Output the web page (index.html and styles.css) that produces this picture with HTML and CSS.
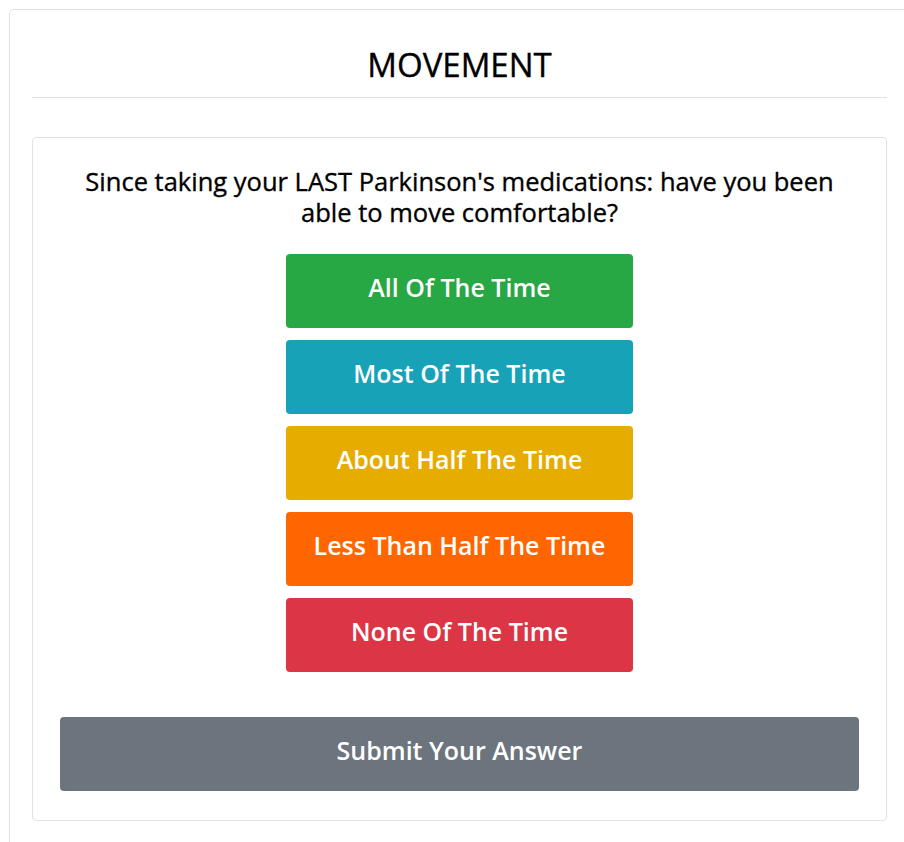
FILE: index.html
```html
<!DOCTYPE html>
<html lang="en">
<head>
<meta charset="utf-8">
<title>Movement</title>
<link rel="stylesheet" href="styles.css">
</head>
<body>
<div class="outer">
  <div class="header">
    <h2 class="title">MOVEMENT</h2>
  </div>
  <div class="question-card">
    <h4 class="question">Since taking your LAST Parkinson's medications: have you been able to move comfortable?</h4>
    <div class="options">
      <button class="opt opt-green">All Of The Time</button>
      <button class="opt opt-teal">Most Of The Time</button>
      <button class="opt opt-yellow">About Half The Time</button>
      <button class="opt opt-orange">Less Than Half The Time</button>
      <button class="opt opt-red">None Of The Time</button>
    </div>
    <button class="submit">Submit Your Answer</button>
  </div>
</div>
</body>
</html>
```
FILE: styles.css
```css
html, body {
  margin: 0;
  padding: 0;
  background: #fff;
  overflow: hidden;
}
body {
  font-family: "Segoe UI", "Open Sans", "Noto Sans", sans-serif;
  color: #111;
  height: 842px;
}
.outer {
  box-sizing: border-box;
  margin: 9px 0 0 9px;
  width: 901px;
  height: 900px;
  border: 1px solid #e2e2e2;
  border-radius: 5px;
  padding: 0 22px;
}
.header {
  padding: 36px 0 13px;
  border-bottom: 1px solid #e0e0e0;
}
.title {
  margin: 0;
  text-align: center;
  font-size: 33px;
  line-height: 38px;
  font-weight: 500;
  color: #000;
  -webkit-text-stroke: 0.35px #000;
}
.question-card {
  margin-top: 39px;
  border: 1px solid #e2e2e2;
  border-radius: 4px;
  padding: 28px 27px 29px;
  display: flex;
  flex-direction: column;
  align-items: center;
}
.question {
  margin: 0;
  text-align: center;
  font-size: 25.5px;
  line-height: 31px;
  font-weight: 500;
  color: #000;
  -webkit-text-stroke: 0.35px #000;
}
.options {
  margin-top: 26px;
  display: flex;
  flex-direction: column;
  gap: 12px;
}
.opt, .submit {
  font-family: inherit;
  border: none;
  border-radius: 4px;
  color: #fff;
  font-size: 25px;
  font-weight: 600;
  height: 74px;
  padding: 0 0 9px;
  cursor: pointer;
}
.opt {
  width: 347px;
}
.opt-green { background: #28a745; }
.opt-teal { background: #17a2b8; }
.opt-yellow { background: #e6ac00; }
.opt-orange { background: #ff6600; }
.opt-red { background: #dc3545; }
.submit {
  margin-top: 45px;
  width: 100%;
  background: #6c757d;
}
```
